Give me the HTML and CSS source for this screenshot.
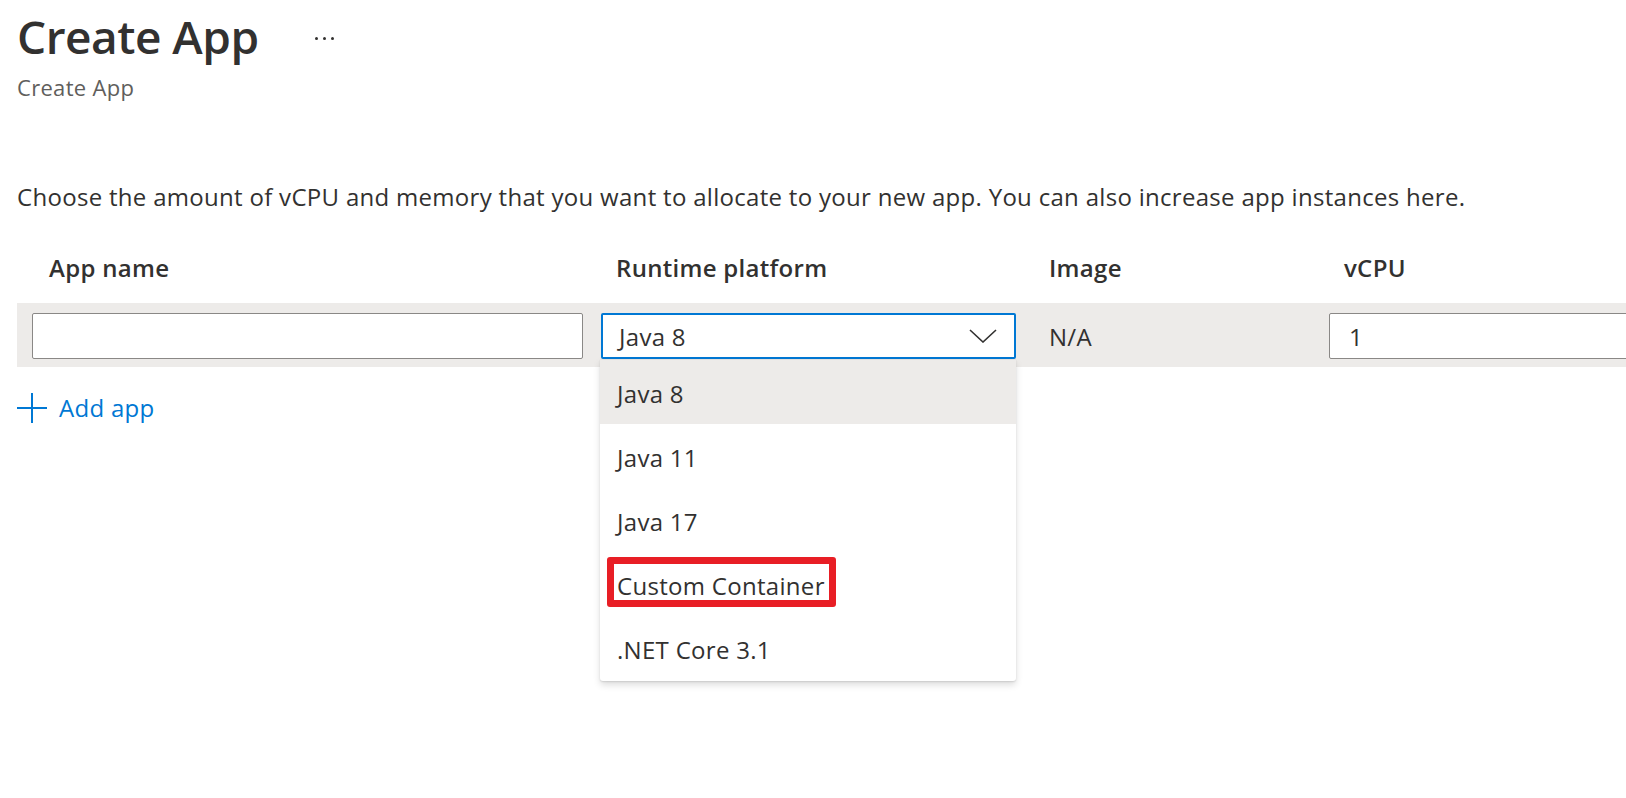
FILE: index.html
```html
<!DOCTYPE html>
<html lang="en">
<head>
<meta charset="utf-8">
<title>Create App</title>
<link rel="stylesheet" href="styles.css">
</head>
<body>
<div class="page">
  <header class="head">
    <div class="title-row">
      <h1 class="title">Create App</h1>
      <span class="more"><i></i><i></i><i></i></span>
    </div>
    <div class="subtitle">Create App</div>
  </header>

  <p class="desc">Choose the amount of vCPU and memory that you want to allocate to your new app. You can also increase app instances here.</p>

  <div class="table">
    <div class="grid thead">
      <div class="th th-first">App name</div>
      <div class="th">Runtime platform</div>
      <div class="th">Image</div>
      <div class="th">vCPU</div>
    </div>
    <div class="grid trow">
      <div class="input"></div>
      <div class="select-wrap">
        <div class="select">
          <span>Java 8</span>
          <svg class="chev" width="28" height="14" viewBox="0 0 28 14"><path d="M1 1 L14 13 L27 1" fill="none" stroke="#323130" stroke-width="1.6"/></svg>
        </div>
        <ul class="menu">
          <li class="item selected">Java 8</li>
          <li class="item">Java 11</li>
          <li class="item">Java 17</li>
          <li class="item marked">Custom Container</li>
          <li class="item">.NET Core 3.1</li>
        </ul>
      </div>
      <div class="cell-text">N/A</div>
      <div class="input"><span>1</span></div>
    </div>
  </div>

  <div class="add">
    <svg width="30" height="30" viewBox="0 0 30 30"><path d="M15 0 V30 M0 15 H30" stroke="#0078d4" stroke-width="2" fill="none"/></svg>
    <span>Add app</span>
  </div>
</div>
</body>
</html>
```
FILE: styles.css
```css
*, *::before, *::after { box-sizing: border-box; }
html, body { margin: 0; padding: 0; background: #fff; }
body {
  font-family: "Open Sans", "Noto Sans", sans-serif;
  color: #323130;
  overflow: hidden;
  width: 1626px;
  height: 798px;
  font-size: 24px;
  letter-spacing: 0.3px;
}
.page { padding-left: 17px; }

.head { padding-top: 6px; }
.title-row { display: flex; align-items: center; gap: 56px; height: 60px; }
.title {
  margin: 0;
  font-size: 46px;
  font-weight: 600;
  line-height: 60px;
  letter-spacing: -0.5px;
}
.more { display: flex; gap: 5px; margin-top: 4px; }
.more i { width: 3px; height: 3px; border-radius: 50%; background: #323130; display: block; }
.subtitle {
  margin-top: 7px;
  font-size: 22px;
  line-height: 28px;
  color: #605e5c;
}

.desc {
  margin: 81px 0 0;
  line-height: 30px;
  white-space: nowrap;
}

.table { margin-top: 41px; }
.grid {
  display: grid;
  grid-template-columns: 551px 415px 277px 420px;
  column-gap: 18px;
  padding-left: 15px;
}
.thead { height: 50px; }
.th {
  font-weight: 600;
  line-height: 30px;
  padding-left: 15px;
}
.th-first { padding-left: 17px; }

.trow {
  background: #edebe9;
  height: 64px;
  padding-top: 10px;
  align-items: start;
}
.input {
  height: 46px;
  background: #fff;
  border: 1px solid #8a8886;
  border-radius: 2px;
  display: flex;
  align-items: center;
  padding-left: 19px;
}
.select-wrap { position: relative; }
.select {
  height: 46px;
  background: #fff;
  border: 2px solid #0078d4;
  border-radius: 2px;
  display: flex;
  align-items: center;
  justify-content: space-between;
  padding: 0 17px 0 16px;
}
.chev { display: block; }
.cell-text {
  height: 46px;
  display: flex;
  align-items: center;
  padding-left: 15px;
}

.menu {
  position: absolute;
  left: -1px;
  top: 47px;
  width: 416px;
  margin: 0;
  padding: 0 0 1px;
  list-style: none;
  background: #fff;
  border-radius: 0 0 3px 3px;
  box-shadow: 0 3.2px 7.2px rgba(0,0,0,0.132), 0 0.6px 1.8px rgba(0,0,0,0.108);
  z-index: 5;
}
.item {
  height: 64px;
  display: flex;
  align-items: center;
  padding: 3px 0 0 17px;
  position: relative;
}
.item.selected { background: #edebe9; }
.item.marked::after {
  content: "";
  position: absolute;
  left: 7px;
  top: 5px;
  width: 229px;
  height: 50px;
  border: 7px solid #e81e25;
  border-radius: 3px;
}

.add {
  display: flex;
  align-items: center;
  gap: 12px;
  margin-top: 26px;
  color: #0078d4;
  line-height: 30px;
}
.add svg { display: block; }
```
